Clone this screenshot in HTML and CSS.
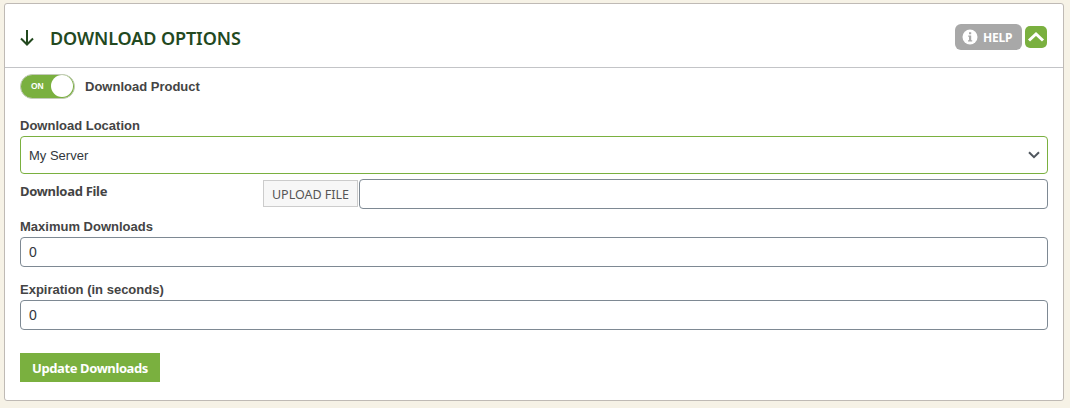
FILE: index.html
```html
<!DOCTYPE html>
<html lang="en">
<head>
    <meta charset="UTF-8">
    <meta name="viewport" content="width=device-width, initial-scale=1.0">
    <title>Download Options</title>
    <link rel="stylesheet" href="styles.css">
</head>
<body>

    <div class="panel">
        <div class="panel-header">
            <svg class="icon-down" width="14" height="16" viewBox="0 0 14 16">
                <path d="M7 0V14.5M1 8.5L7 14.5L13 8.5" fill="none" stroke="#23491f" stroke-width="2"/>
            </svg>
            <h2>DOWNLOAD OPTIONS</h2>
            <a class="help" href="#">
                <svg width="16" height="16" viewBox="0 0 16 16">
                    <circle cx="8" cy="8" r="7.5" fill="#fff"/>
                    <path d="M7 3.2h2.2v2H7zM6.2 6.5h3v4.7h1v1.3H6v-1.3h1V7.8h-.8z" fill="#a8a8a8"/>
                </svg>
                <span class="help-text">HELP</span>
            </a>
            <a class="collapse" href="#">
                <svg width="22" height="22" viewBox="0 0 22 22">
                    <path d="M4 14.5L11 8L18 14.5" fill="none" stroke="#fff" stroke-width="3"/>
                </svg>
            </a>
        </div>

        <form class="panel-body">
            <div class="toggle-row">
                <span class="toggle"><span class="toggle-text">ON</span><span class="toggle-knob"></span></span>
                <span class="label toggle-label">Download Product</span>
            </div>

            <label class="label" for="location">Download Location</label>
            <div class="select" id="location">
                <span>My Server</span>
                <svg width="12" height="8" viewBox="0 0 12 8">
                    <path d="M1 1.2L6 6.2L11 1.2" fill="none" stroke="#50575e" stroke-width="2"/>
                </svg>
            </div>

            <div class="file-row">
                <label class="file-label" for="file">Download File</label>
                <button type="button" class="upload">UPLOAD FILE</button>
                <input type="text" class="input file-input" id="file">
            </div>

            <label class="label" for="max">Maximum Downloads</label>
            <input type="text" class="input max-input" id="max" value="0">

            <label class="label" for="expiration">Expiration (in seconds)</label>
            <input type="text" class="input" id="expiration" value="0">

            <button type="button" class="update">Update Downloads</button>
        </form>
    </div>

</body>
</html>
```
FILE: styles.css
```css
* {
    box-sizing: border-box;
}
body {
    margin: 0;
    padding: 3px 6px 0 4px;
    background-color: #f6f2e6;
    font-family: "Liberation Sans", Arial, sans-serif;
    font-size: 13px;
    color: #444;
}
.panel {
    height: 398px;
    border: 1px solid #bfbab5;
    border-radius: 3px;
    background-color: #fff;
}
.panel-header {
    display: flex;
    align-items: center;
    height: 64px;
    padding: 0 16px 0 15px;
    border-bottom: 1px solid #c3c4c7;
}
.icon-down {
    margin-top: 4px;
}
h2 {
    margin: 5px auto 0 16px;
    font-family: "Noto Sans", sans-serif;
    font-size: 18px;
    line-height: 24px;
    font-weight: 600;
    letter-spacing: -0.1px;
    color: #23491f;
}
.help {
    display: flex;
    align-items: center;
    gap: 5px;
    width: 67px;
    height: 26px;
    margin: 2px 3px 0 0;
    padding-left: 7px;
    border-radius: 6px;
    background-color: #a8a8a8;
    color: #fff;
    font-family: "Noto Sans", sans-serif;
    font-size: 12px;
    font-weight: 700;
    letter-spacing: -0.2px;
    text-decoration: none;
}
.help-text {
    padding-top: 2px;
}
.collapse {
    width: 22px;
    height: 22px;
    margin-top: 2px;
    border-radius: 5px;
    background-color: #7ab03f;
}
.collapse svg {
    display: block;
}
.panel-body {
    padding: 5px 15px 0;
}
.toggle-row {
    display: flex;
    align-items: center;
    height: 26px;
    margin-bottom: 18px;
}
.toggle {
    display: flex;
    align-items: center;
    justify-content: space-between;
    width: 55px;
    height: 25px;
    padding: 1px 1px 1px 10px;
    border: 1px solid #c4cbbb;
    border-radius: 13px;
    background-color: #7ab03f;
}
.toggle-text {
    font-size: 8.5px;
    font-weight: 700;
    color: #fff;
}
.toggle-knob {
    width: 22px;
    height: 22px;
    border-radius: 50%;
    background-color: #fff;
}
.label {
    display: block;
    height: 19px;
    line-height: 17px;
    font-weight: 700;
}
.toggle-label {
    margin: 2px 0 0 10px;
}
.select {
    display: flex;
    align-items: center;
    justify-content: space-between;
    height: 38px;
    padding: 0 7px 0 8px;
    border: 1px solid #7ab03f;
    border-radius: 4px;
    color: #32373c;
}
.input {
    display: block;
    width: 100%;
    height: 30px;
    padding: 0 8px;
    border: 1px solid #7e8993;
    border-radius: 4px;
    background-color: #fff;
    color: #32373c;
    font-family: "Liberation Sans", Arial, sans-serif;
    font-size: 14px;
}
.file-row {
    display: flex;
    height: 30px;
    margin: 5px 0 9px;
}
.file-label {
    width: 243px;
    line-height: 24px;
    font-family: "Noto Sans", sans-serif;
    font-size: 13px;
    font-weight: 700;
    letter-spacing: -0.3px;
}
.upload {
    width: 95px;
    height: 27px;
    margin: 1px 1px 0 0;
    padding: 1px 0 0;
    border: 1px solid #ccc;
    background-color: #f7f7f7;
    color: #555;
    font-family: "Noto Sans", sans-serif;
    font-size: 12.5px;
}
.file-input {
    flex: 1;
}
.max-input {
    margin-bottom: 14px;
}
.update {
    display: block;
    width: 140px;
    height: 29px;
    margin-top: 23px;
    padding: 0;
    border: 0;
    background-color: #7ab03f;
    color: #fff;
    font-family: "Noto Sans", sans-serif;
    font-size: 13px;
    font-weight: 700;
    letter-spacing: -0.4px;
}
```
